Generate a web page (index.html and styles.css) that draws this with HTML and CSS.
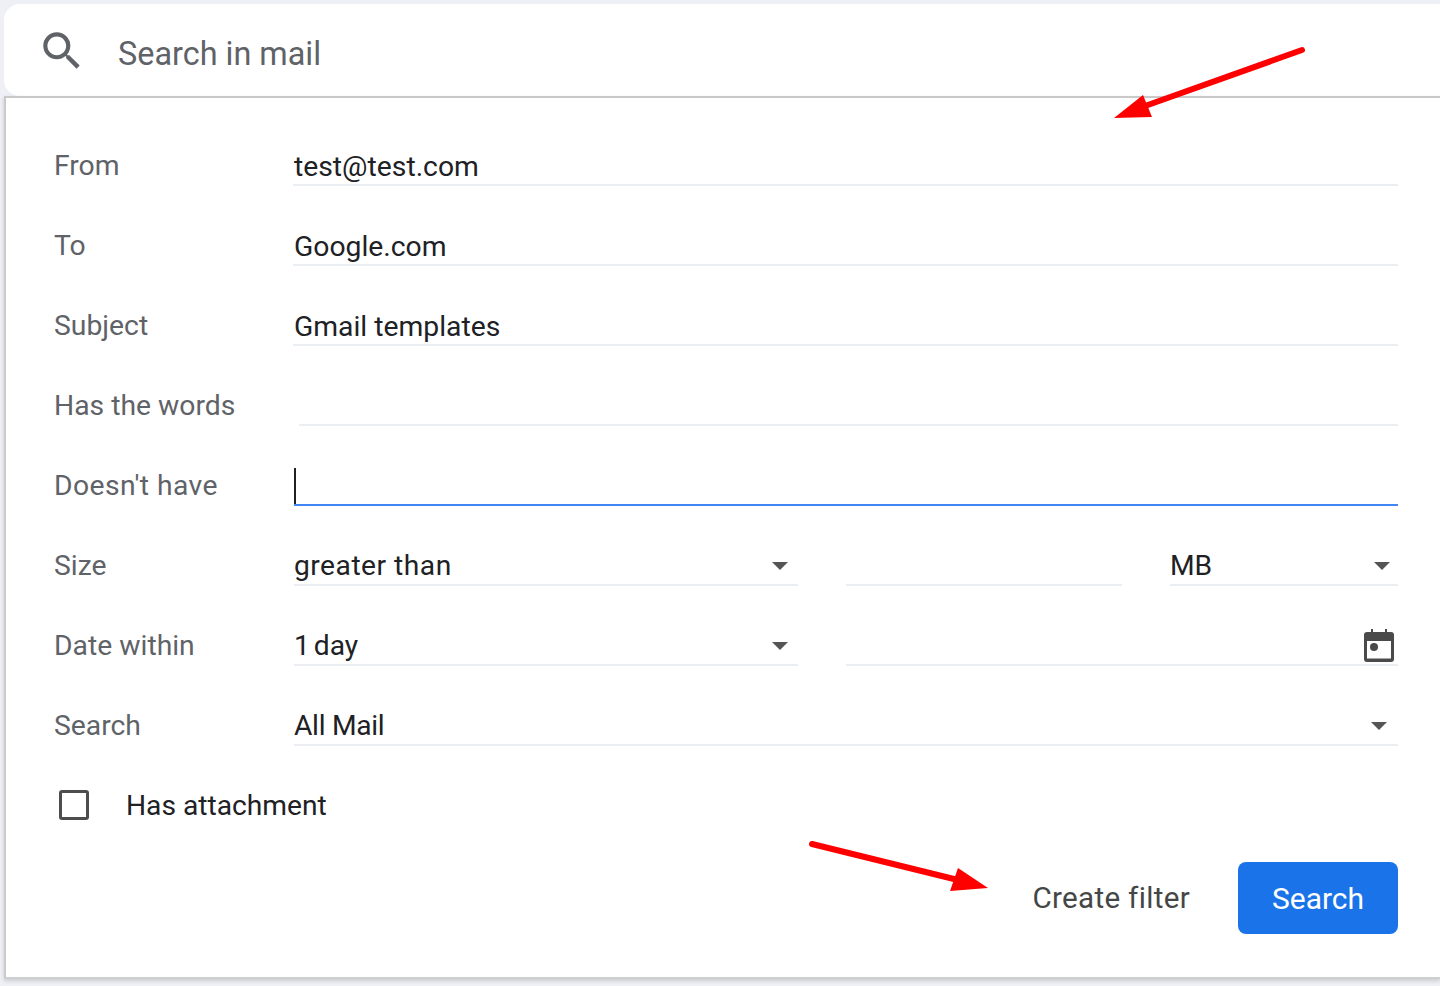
FILE: index.html
```html
<!DOCTYPE html>
<html lang="en">
<head>
  <meta charset="UTF-8" />
  <title>Search in mail</title>
  <link rel="stylesheet" href="styles.css">
</head>
<body>

  <header class="search-bar">
    <svg class="search-icon" viewBox="0 0 24 24"><path d="M15.5 14h-.79l-.28-.27A6.47 6.47 0 0 0 16 9.5 6.5 6.5 0 1 0 9.5 16c1.61 0 3.09-.59 4.23-1.57l.27.28v.79l5 4.99L20.49 19l-4.99-5zm-6 0C7.01 14 5 11.99 5 9.5S7.01 5 9.500 5 14 7.01 14 9.500 11.990 14 9.500 14z"/></svg>
    <span class="search-text">Search in mail</span>
  </header>

  <main class="panel">
    <div class="row">
      <div class="label">From</div>
      <div class="field field-shift">test@test.com</div>
    </div>
    <div class="row">
      <div class="label">To</div>
      <div class="field field-shift">Google.com</div>
    </div>
    <div class="row">
      <div class="label">Subject</div>
      <div class="field field-shift">Gmail templates</div>
    </div>
    <div class="row">
      <div class="label">Has the words</div>
      <div class="field field-inset"></div>
    </div>
    <div class="row">
      <div class="label label-wide">Doesn't have</div>
      <div class="field field-focus"><span class="caret"></span></div>
    </div>
    <div class="row">
      <div class="label">Size</div>
      <div class="field-group size-group">
        <div class="field select"><span class="text-wide">greater than</span> <span class="arrow"></span></div>
        <div class="field"></div>
        <div class="field select select-end">MB <span class="arrow"></span></div>
      </div>
    </div>
    <div class="row">
      <div class="label">Date within</div>
      <div class="field-group date-group">
        <div class="field select"><span class="text-tight">1 day</span> <span class="arrow"></span></div>
        <div class="field select select-end">
          <span></span>
          <svg class="calendar-icon" viewBox="0 0 32 34"><path d="M8 1h2v3h12V1h2v3h4a3 3 0 0 1 3 3v24a3 3 0 0 1-3 3H4a3 3 0 0 1-3-3V7a3 3 0 0 1 3-3h4zM4 13v17.500h24V13z" fill-rule="evenodd"/><circle cx="11" cy="19" r="4"/></svg>
        </div>
      </div>
    </div>
    <div class="row">
      <div class="label">Search</div>
      <div class="field select select-wide"><span class="text-narrow">All Mail</span> <span class="arrow"></span></div>
    </div>

    <label class="attachment">
      <span class="checkbox"></span>
      Has attachment
    </label>

    <div class="actions">
      <a class="create-filter">Create filter</a>
      <button class="search-btn">Search</button>
    </div>
  </main>

  <!-- red annotation arrows on top of the screenshot -->
  <svg class="annotations" viewBox="0 0 1440 986">
    <line x1="1302" y1="50" x2="1145" y2="106" stroke="#ff0000" stroke-width="6" stroke-linecap="round"/>
    <polygon points="1114,118 1143,95 1152,117" fill="#ff0000"/>
    <line x1="812" y1="844" x2="958" y2="880" stroke="#ff0000" stroke-width="6" stroke-linecap="round"/>
    <polygon points="988,888 958,868 950,891" fill="#ff0000"/>
  </svg>

</body>
</html>
```

FILE: styles.css
```css
* {
  box-sizing: border-box;
  margin: 0;
  padding: 0;
  font-family: Roboto, 'Noto Sans', sans-serif;
}

body {
  background: #eef0f5;
  height: 986px;
  overflow: hidden;
  padding-top: 4px;
}

.search-bar {
  display: flex;
  align-items: center;
  height: 92px;
  margin-left: 4px;
  padding-left: 33px;
  background: white;
  border-radius: 16px 0 0 16px;
}

.search-icon {
  width: 50px;
  height: 50px;
  margin-top: 2px;
  fill: #5f6368;
}

.search-text {
  margin-top: 8px;
  margin-left: 31px;
  font-size: 32.4px;
  color: #5f6368;
}

.panel {
  height: 883px;
  margin-left: 4px;
  padding: 8px 42px 0 48px;
  background: white;
  border-top: 2px solid #c9c9c9;
  border-left: 2px solid #c9c9c9;
  border-bottom: 2px solid #cfcfcf;
  box-shadow: 0 2px 4px rgba(0,0,0,0.15);
}

.row {
  display: grid;
  grid-template-columns: 240px 1fr;
  height: 80px;
}

.label {
  align-self: end;
  padding-bottom: 2px;
  font-size: 28.3px;
  line-height: 36px;
  color: #5f6368;
}

.label-wide {
  letter-spacing: 0.4px;
}

.field {
  display: flex;
  align-items: flex-end;
  height: 80px;
  font-size: 28.2px;
  line-height: 36px;
  color: #202124;
  border-bottom: 2px solid #ebeef2;
}

.field-shift {
  margin-left: -1px;
  padding-left: 1px;
  font-size: 28.3px;
  line-height: 34px;
}

.field-inset {
  margin-left: 5px;
}

.field-focus {
  border-bottom-color: #4285f4;
}

.caret {
  width: 2px;
  height: 36px;
  background: #202124;
}

.field-group {
  display: grid;
  column-gap: 48px;
}

.size-group {
  grid-template-columns: 504px 276px 228px;
}

.date-group {
  grid-template-columns: 504px 552px;
}

.select {
  justify-content: space-between;
  padding-right: 10px;
}

.select-end {
  padding-right: 8px;
}

.select-wide {
  padding-right: 11px;
}

.text-wide {
  letter-spacing: 0.5px;
}

.text-tight {
  word-spacing: -3px;
}

.text-narrow {
  letter-spacing: -0.3px;
}

.arrow {
  width: 0;
  height: 0;
  margin-bottom: 14px;
  border-left: 8px solid transparent;
  border-right: 8px solid transparent;
  border-top: 8px solid #555;
}

.calendar-icon {
  width: 32px;
  height: 34px;
  margin-right: -5px;
  margin-bottom: 2px;
  fill: #4a4a4a;
}

.attachment {
  display: flex;
  align-items: center;
  height: 62px;
  margin-top: 28px;
  font-size: 28.2px;
  color: #202124;
}

.checkbox {
  width: 30px;
  height: 30px;
  margin-left: 5px;
  margin-right: 37px;
  border: 3px solid #4d4d4d;
  border-radius: 3px;
}

.actions {
  display: flex;
  justify-content: flex-end;
  align-items: center;
  gap: 48px;
  margin-top: 26px;
}

.create-filter {
  font-size: 29.6px;
  letter-spacing: 0.3px;
  color: #444746;
}

.search-btn {
  width: 160px;
  height: 72px;
  background-color: #1a73e8;
  color: white;
  border: none;
  border-radius: 8px;
  font-size: 30px;
}

.annotations {
  position: absolute;
  top: 0;
  left: 0;
  width: 1440px;
  height: 986px;
}
```
